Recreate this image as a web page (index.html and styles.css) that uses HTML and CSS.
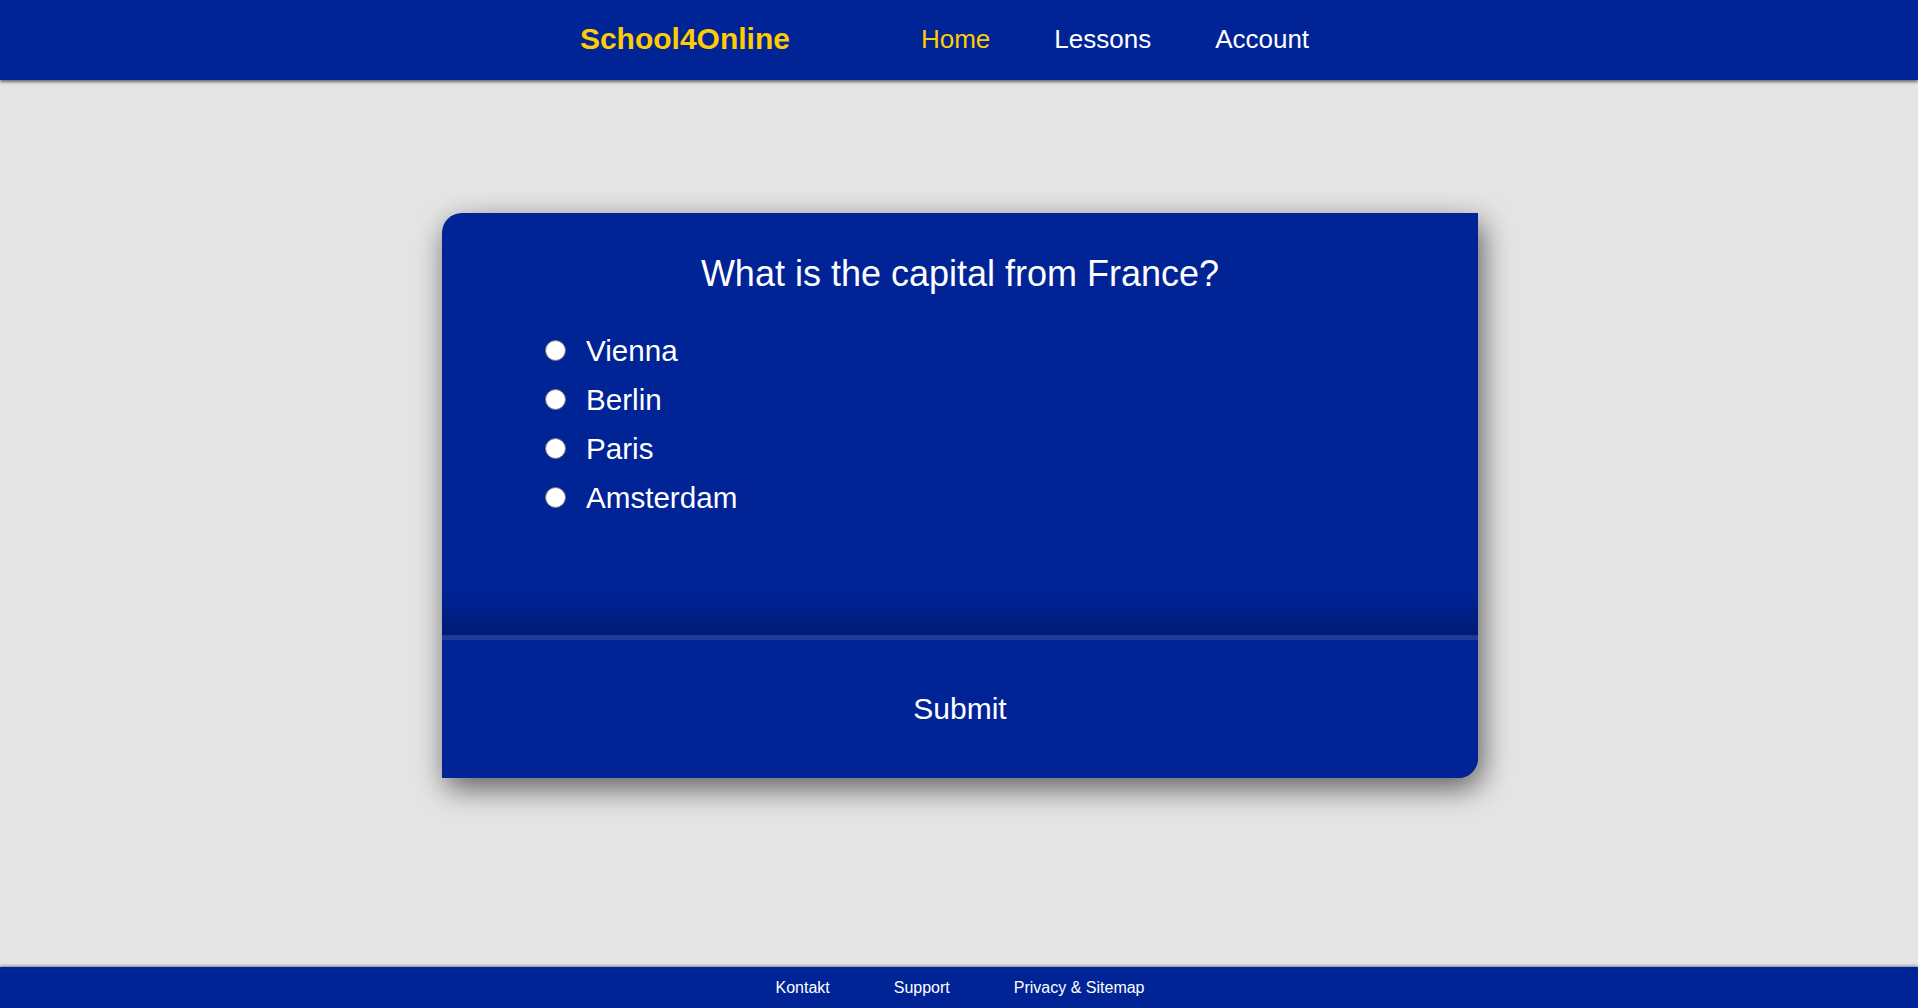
FILE: index.html
```html
<!DOCTYPE html>
<html lang="en">
<head>
<meta charset="utf-8">
<title>School4Online</title>
<link rel="stylesheet" href="styles.css">
</head>
<body>
<header class="topbar">
  <a class="logo" href="#">School4Online</a>
  <nav class="nav">
    <a class="nav-link active" href="#">Home</a>
    <a class="nav-link" href="#">Lessons</a>
    <a class="nav-link" href="#">Account</a>
  </nav>
</header>
<main class="main">
  <form class="quiz">
    <div class="quiz-body">
      <h2 class="question">What is the capital from France?</h2>
      <div class="options">
        <label class="option"><input type="radio" name="capital" class="radio"><span>Vienna</span></label>
        <label class="option"><input type="radio" name="capital" class="radio"><span>Berlin</span></label>
        <label class="option"><input type="radio" name="capital" class="radio"><span>Paris</span></label>
        <label class="option"><input type="radio" name="capital" class="radio"><span>Amsterdam</span></label>
      </div>
    </div>
    <button type="button" class="submit">Submit</button>
  </form>
</main>
<footer class="footer">
  <a class="footer-link" href="#">Kontakt</a>
  <a class="footer-link" href="#">Support</a>
  <a class="footer-link" href="#">Privacy &amp; Sitemap</a>
</footer>
</body>
</html>
```
FILE: styles.css
```css
* { box-sizing: border-box; }
html, body { height: 100%; }
body {
  margin: 0;
  min-height: 100vh;
  display: flex;
  flex-direction: column;
  background: #e5e5e5;
  font-family: "Liberation Sans", Arial, sans-serif;
  color: #fff;
}
a { text-decoration: none; color: inherit; }

.topbar {
  height: 80px;
  padding: 0 0 2px 3px;
  background: #002396;
  display: flex;
  align-items: center;
  justify-content: center;
  box-shadow: 0 2px 3px rgba(0,0,0,0.55);
  position: relative;
  z-index: 1;
}
.logo {
  color: #ffcc00;
  font-weight: bold;
  font-size: 30px;
  margin-right: 99px;
}
.nav { display: flex; }
.nav-link {
  font-size: 26px;
  padding: 0 32px;
  color: #fff;
}
.nav-link.active { color: #ffcc00; }

.main {
  flex: 1;
  padding: 133px 0 0 2px;
}
.quiz {
  width: 1036px;
  margin: 0 auto;
  background: #002396;
  border-radius: 20px 0 20px 0;
  overflow: hidden;
  box-shadow: 4px 10px 30px rgba(0,0,0,0.6);
  display: flex;
  flex-direction: column;
}
.quiz-body {
  padding: 40px 0 113px;
  background: linear-gradient(to bottom,
    rgba(0,0,0,0) calc(100% - 45px),
    rgba(0,0,0,0.06) calc(100% - 28px),
    rgba(0,0,0,0.16) calc(100% - 12px),
    rgba(0,0,0,0.24) 100%);
}
.question {
  margin: 0 0 32px;
  font-size: 36px;
  font-weight: normal;
  text-align: center;
  line-height: 41px;
}
.options {
  display: flex;
  flex-direction: column;
  padding-left: 103px;
}
.option {
  display: flex;
  align-items: center;
  height: 49px;
  font-size: 29.6px;
}
.radio {
  appearance: none;
  -webkit-appearance: none;
  width: 21px;
  height: 21px;
  margin: 0 20px 0 0;
  border-radius: 50%;
  background: #fff;
  border: 1px solid #767676;
}
.submit {
  height: 143px;
  border: 0;
  border-top: 5px solid #1f3a98;
  background: #002396;
  color: #fff;
  font-family: "Liberation Sans", Arial, sans-serif;
  font-size: 30px;
  padding: 0;
  cursor: pointer;
}

.footer {
  height: 41px;
  padding-left: 2px;
  background: #002396;
  display: flex;
  align-items: center;
  justify-content: center;
  box-shadow: 0 -1px 3px rgba(0,0,0,0.45);
}
.footer-link {
  font-size: 16px;
  padding: 0 32px;
}
```
